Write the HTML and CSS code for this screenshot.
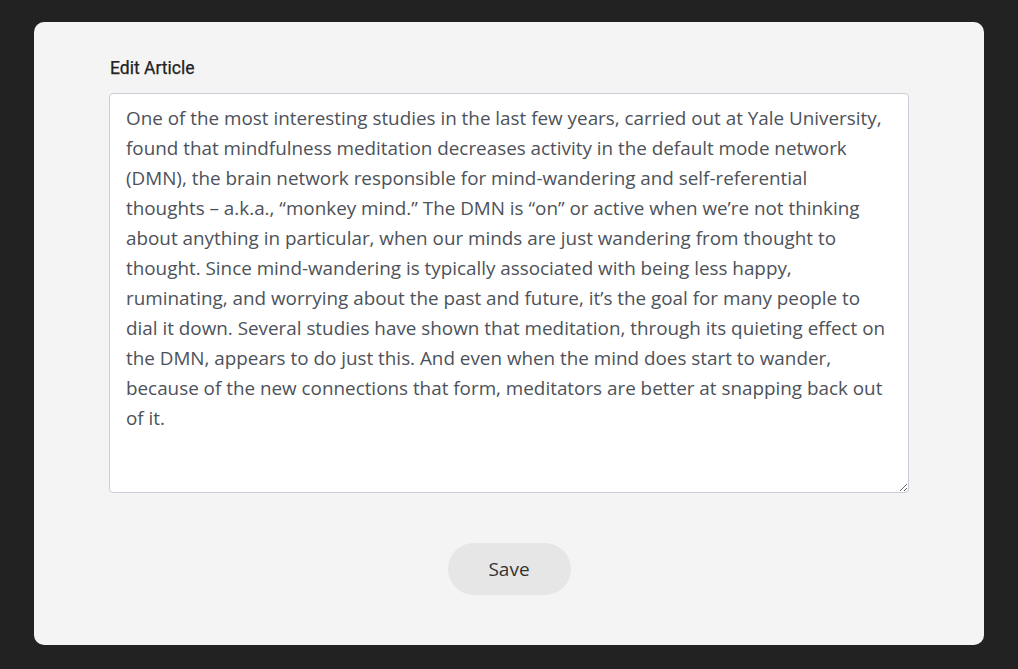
FILE: index.html
```html
<!DOCTYPE html>
<html>
<head>
<meta charset="utf-8">
<link rel="stylesheet" href="styles.css">
</head>
<body>
<main class="card">
  <form class="editor">
    <label class="label" for="article">Edit Article</label>
    <textarea id="article" class="article">One of the most interesting studies in the last few years, carried out at Yale University, found that mindfulness meditation decreases activity in the default mode network (DMN), the brain network responsible for mind-wandering and self-referential thoughts – a.k.a., “monkey mind.” The DMN is “on” or active when we’re not thinking about anything in particular, when our minds are just wandering from thought to thought. Since mind-wandering is typically associated with being less happy, ruminating, and worrying about the past and future, it’s the goal for many people to dial it down. Several studies have shown that meditation, through its quieting effect on the DMN, appears to do just this. And even when the mind does start to wander, because of the new connections that form, meditators are better at snapping back out of it.</textarea>
    <div class="actions">
      <button type="button" class="save">Save</button>
    </div>
  </form>
</main>
</body>
</html>
```

FILE: styles.css
```css
html, body {
  margin: 0;
  height: 100%;
}
body {
  background: #222222;
  padding: 22px 34px 24px;
  box-sizing: border-box;
}
.card {
  background: #f4f4f4;
  border-radius: 10px;
  height: 623px;
  box-sizing: border-box;
  padding: 36px 75px 50px;
}
.editor {
  display: flex;
  flex-direction: column;
}
.label {
  font-family: Roboto, sans-serif;
  font-weight: 400;
  font-size: 17.5px;
  color: #222;
  line-height: 20px;
  margin-bottom: 15px;
  margin-left: 1px;
  -webkit-text-stroke: 0.25px #222;
}
.article {
  width: 800px;
  height: 400px;
  box-sizing: border-box;
  border: 1px solid #c9ced6;
  border-radius: 4px;
  background: #fff;
  padding: 9px 20px 9px 16px;
  font-family: "Open Sans", sans-serif;
  font-size: 18.85px;
  line-height: 30px;
  color: #4d525a;
  resize: vertical;
  outline: none;
  margin: 0;
}
.actions {
  display: flex;
  justify-content: center;
  margin-top: 50px;
}
.save {
  width: 123px;
  height: 52px;
  border: none;
  border-radius: 26px;
  background: #e6e6e6;
  font-family: "Open Sans", sans-serif;
  font-size: 19px;
  color: #333;
  cursor: pointer;
}
```
